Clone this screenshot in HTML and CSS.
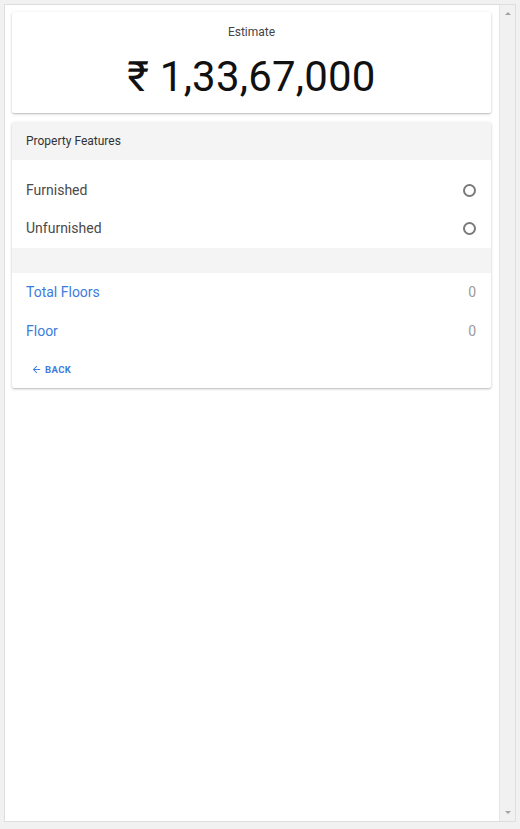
FILE: index.html
```html
<!DOCTYPE html>
<html>
<head>
<meta charset="utf-8">
<link rel="stylesheet" href="styles.css">
</head>
<body>
<div class="frame">
  <div class="content">
    <div class="card estimate">
      <div class="est-label">Estimate</div>
      <div class="est-value">₹ 1,33,67,000</div>
    </div>
    <div class="card features">
      <div class="feat-head">Property Features</div>
      <div class="opts">
        <div class="opt"><span>Furnished</span><span class="radio"></span></div>
        <div class="opt"><span>Unfurnished</span><span class="radio"></span></div>
      </div>
      <div class="band"></div>
      <div class="fields">
        <div class="field"><span>Total Floors</span><span class="val">0</span></div>
        <div class="field"><span>Floor</span><span class="val">0</span></div>
      </div>
      <div class="back">
        <svg width="11" height="11" viewBox="0 0 24 24"><path d="M20 11H7.83l5.59-5.59L12 4l-8 8 8 8 1.41-1.41L7.83 13H20v-2z" fill="#3b7ddd"/></svg>
        <span>BACK</span>
      </div>
    </div>
  </div>
  <div class="scrollbar">
    <span class="arr up"></span>
    <span class="arr down"></span>
  </div>
</div>
</body>
</html>
```
FILE: styles.css
```css
html, body { margin: 0; padding: 0; }
body {
  background: #f1f1f1;
  font-family: Roboto, "Liberation Sans", sans-serif;
  padding: 4px 4px 0 4px;
  height: 829px;
  box-sizing: border-box;
}
.frame {
  display: flex;
  width: 512px;
  height: 818px;
  background: #fff;
  border: 1px solid #dedede;
  box-sizing: border-box;
}
.content {
  flex: 1;
  padding: 7px 8px 0 7px;
  display: flex;
  flex-direction: column;
  gap: 9px;
}
.scrollbar {
  width: 16px;
  background: #f1f1f1;
  border-left: 1px solid #e4e4e4;
  display: flex;
  flex-direction: column;
  justify-content: space-between;
  align-items: center;
  padding: 7px 0;
  box-sizing: border-box;
}
.arr { width: 0; height: 0; border-left: 3px solid transparent; border-right: 3px solid transparent; }
.arr.up { border-bottom: 3px solid #a3a3a3; }
.arr.down { border-top: 3px solid #a3a3a3; }
.card {
  background: #fff;
  border-radius: 2px;
  box-shadow: 0 1px 3px rgba(0,0,0,0.22), 0 1px 1px rgba(0,0,0,0.08);
}
.estimate {
  height: 101px;
  display: flex;
  flex-direction: column;
  align-items: center;
  box-sizing: border-box;
  padding-top: 12px;
}
.est-label { font-size: 12px; color: #444; line-height: 16px; }
.est-value { font-size: 42px; color: #111; line-height: 48px; margin-top: 13px; letter-spacing: 0.2px; }
.features { overflow: hidden; }
.feat-head {
  background: #f4f4f4;
  height: 38px;
  display: flex;
  align-items: center;
  padding-left: 14px;
  font-size: 12px;
  color: #333;
}
.opts { padding: 11px 14px 1px 14px; }
.opt {
  height: 38px;
  display: flex;
  align-items: center;
  justify-content: space-between;
  font-size: 14px;
  color: #4a4a4a;
}
.radio {
  flex-shrink: 0;
  width: 13px; height: 13px;
  box-sizing: border-box;
  border: 2px solid #7a7a7a;
  border-radius: 50%;
  margin-right: 1px;
}
.band { background: #f4f4f4; height: 25px; }
.fields { padding: 0 14px; }
.field {
  height: 39px;
  display: flex;
  align-items: center;
  justify-content: space-between;
  font-size: 14px;
  color: #3b7ddd;
}
.field:first-child { height: 38px; }
.val { color: #9a9a9a; margin-right: 1px; }
.back {
  display: flex;
  align-items: center;
  gap: 3px;
  padding: 7px 0 0 19px;
  height: 38px;
  box-sizing: border-box;
  font-size: 9.5px;
  font-weight: 700;
  color: #3b7ddd;
  letter-spacing: 0.4px;
  padding-bottom: 6px;
}
```
